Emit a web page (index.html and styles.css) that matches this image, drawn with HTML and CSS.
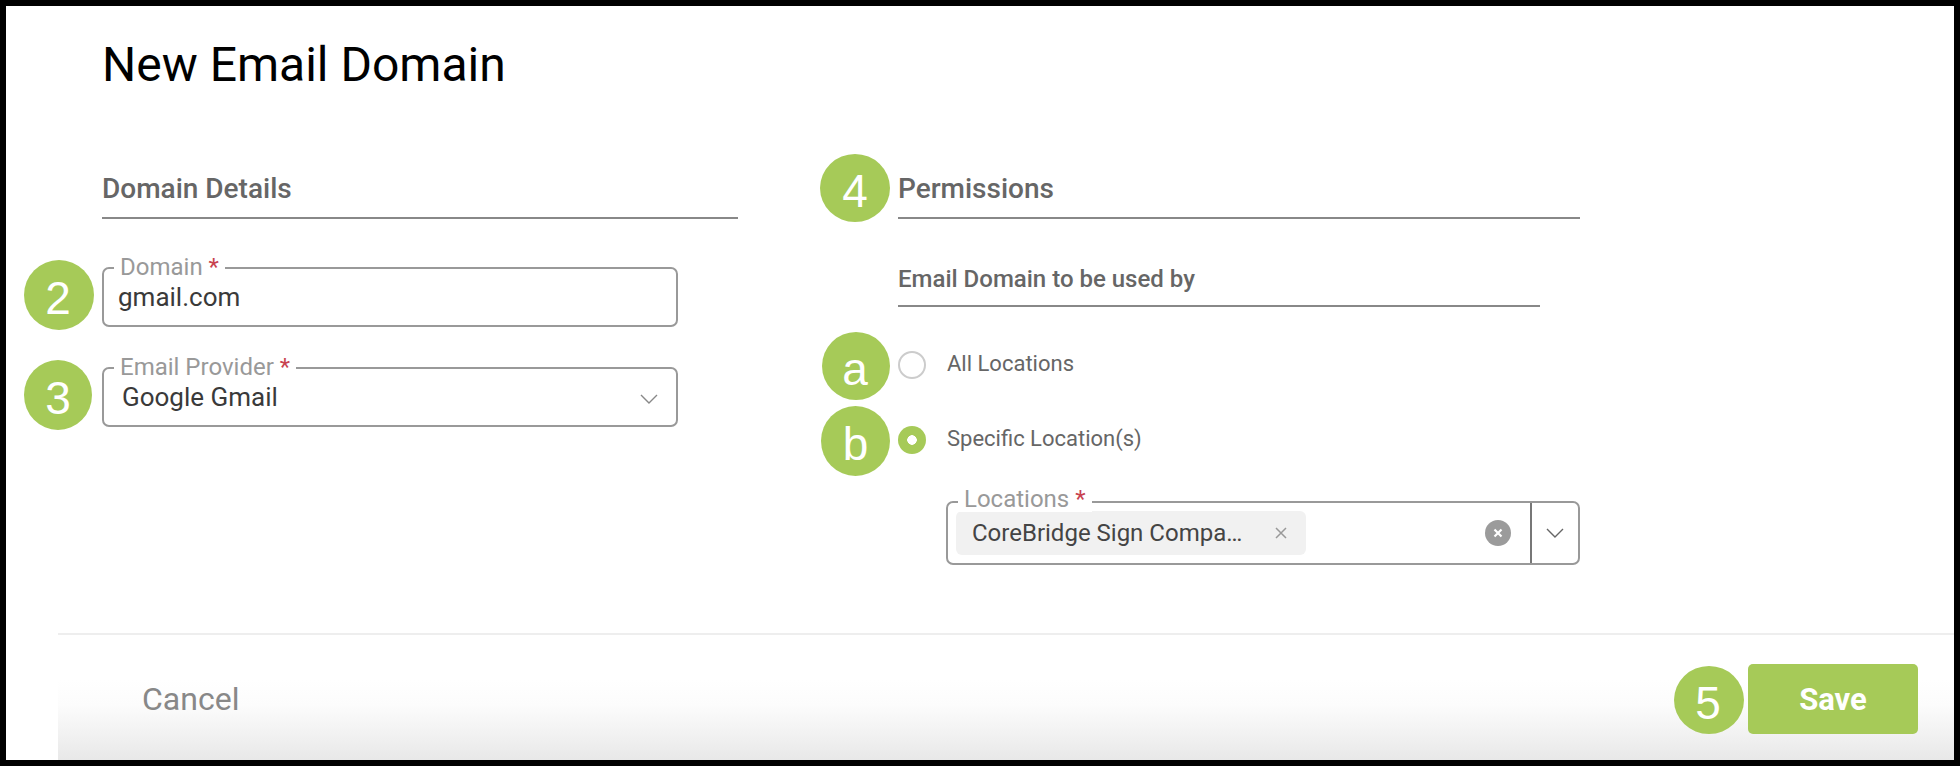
FILE: index.html
```html
<!DOCTYPE html>
<html lang="en">
<head>
<meta charset="utf-8">
<title>New Email Domain</title>
<link rel="stylesheet" href="styles.css">
</head>
<body>
<div class="frame">
  <main class="main">
    <h1 class="title">New Email Domain</h1>
    <div class="columns">
      <section class="col-left">
        <h2 class="section-title">Domain Details</h2>
        <div class="field field-domain">
          <span class="badge badge-left">2</span>
          <label class="float-label">Domain <span class="req">*</span></label>
          <span class="field-value value-domain">gmail.com</span>
        </div>
        <div class="field field-provider">
          <span class="badge badge-left badge-narrow">3</span>
          <label class="float-label">Email Provider <span class="req">*</span></label>
          <span class="field-value value-provider">Google Gmail</span>
          <svg class="chevron" viewBox="0 0 18 10" width="18" height="10"><path d="M1 1l8 8 8-8" fill="none" stroke="#888" stroke-width="1.4"/></svg>
        </div>
      </section>
      <section class="col-right">
        <h2 class="section-title">
          <span class="badge badge-four">4</span>
          Permissions
        </h2>
        <h3 class="sub-title">Email Domain to be used by</h3>
        <div class="radio-row row-all">
          <span class="badge badge-a">a</span>
          <span class="radio"></span>
          <span class="radio-label">All Locations</span>
        </div>
        <div class="radio-row row-specific">
          <span class="badge badge-b">b</span>
          <span class="radio radio-on"></span>
          <span class="radio-label">Specific Location(s)</span>
        </div>
        <div class="field field-locations">
          <label class="float-label label-locations">Locations <span class="req">*</span></label>
          <span class="chip">
            <span class="chip-text">CoreBridge Sign Compa…</span>
            <svg class="chip-x" viewBox="0 0 12 12" width="12" height="12"><path d="M1 1l10 10M11 1L1 11" fill="none" stroke="#999" stroke-width="1.5"/></svg>
          </span>
          <svg class="clear" viewBox="0 0 26 26" width="26" height="26"><circle cx="13" cy="13" r="13" fill="#9b9b9b"/><path d="M9.5 9.5l7 7M16.5 9.5l-7 7" fill="none" stroke="#fff" stroke-width="2.2"/></svg>
          <span class="select-toggle">
            <svg viewBox="0 0 18 10" width="18" height="10"><path d="M1 1l8 8 8-8" fill="none" stroke="#666" stroke-width="1.4"/></svg>
          </span>
        </div>
      </section>
    </div>
  </main>
  <footer class="footer">
    <span class="cancel">Cancel</span>
    <span class="save-wrap">
      <span class="badge badge-save">5</span>
      <button class="save" type="button">Save</button>
    </span>
  </footer>
</div>
</body>
</html>
```
FILE: styles.css
```css
* { box-sizing: border-box; }
html, body { margin: 0; height: 100%; }
body {
  background: #000;
  font-family: Roboto, "Liberation Sans", sans-serif;
  overflow: hidden;
}
.frame {
  margin: 6px 6px 0;
  height: 754px;
  background: #fff;
  display: flex;
  flex-direction: column;
}
.main { flex: 1; padding: 34px 0 0 96px; }
.title {
  margin: 0;
  font-size: 48px;
  line-height: 50px;
  font-weight: 400;
  color: #000;
}
.columns { display: flex; margin-top: 85px; }
.col-left { width: 636px; margin-right: 160px; }
.col-right { width: 682px; }
.section-title {
  position: relative;
  margin: 0;
  height: 44px;
  font-size: 28px;
  line-height: 28px;
  font-weight: 500;
  color: #666;
  border-bottom: 2px solid #888;
}
.sub-title {
  margin: 46px 0 0;
  width: 642px;
  height: 42px;
  font-size: 24px;
  line-height: 28px;
  font-weight: 500;
  color: #666;
  border-bottom: 2px solid #888;
}
.field {
  position: relative;
  border: 2px solid #999;
  border-radius: 7px;
  background: #fff;
  display: flex;
  align-items: center;
}
.field-domain, .field-provider { width: 576px; height: 60px; }
.field-domain { margin-top: 48px; padding-left: 14px; }
.field-provider { margin-top: 40px; padding-left: 18px; justify-content: space-between; padding-right: 18px; }
.field-locations {
  width: 634px;
  height: 64px;
  margin: 47px 0 0 48px;
  padding-left: 8px;
}
.float-label {
  position: absolute;
  left: 10px;
  top: -15px;
  padding: 0 6px;
  background: #fff;
  font-size: 24px;
  line-height: 26px;
  color: #999;
}
.label-locations { top: -17px; }
.req { color: #c8424f; }
.field-value { font-size: 26px; line-height: 30px; color: #3a3a3a; }
.chevron { margin-top: 4px; }
.chip {
  display: flex;
  align-items: center;
  justify-content: space-between;
  width: 350px;
  height: 44px;
  padding: 0 19px 0 16px;
  background: #f1f1f1;
  border-radius: 6px;
}
.chip-text { font-size: 24px; color: #444; white-space: nowrap; }
.clear { margin-left: auto; margin-right: 19px; }
.select-toggle {
  align-self: stretch;
  width: 48px;
  border-left: 2px solid #777;
  display: flex;
  align-items: center;
  justify-content: center;
}
.radio-row { position: relative; display: flex; align-items: center; }
.row-all { margin-top: 44px; height: 28px; }
.row-specific { margin-top: 47px; height: 28px; }
.radio {
  width: 28px;
  height: 28px;
  border: 2px solid #ccc;
  border-radius: 50%;
  background: #fff;
  margin-right: 22px;
  flex: none;
}
.radio-on {
  border: 0;
  background: radial-gradient(circle, #fff 0 4.5px, #a6ca58 5px);
}
.radio-label { font-size: 22px; color: #666; line-height: 24px; margin-left: -1px; margin-top: -2px; }
.badge {
  position: absolute;
  display: flex;
  align-items: center;
  justify-content: center;
  width: 70px;
  height: 70px;
  padding-top: 5px;
  border-radius: 50%;
  background: #a6ca58;
  color: #fff;
  font-family: "Liberation Sans", Arial, sans-serif;
  font-size: 46px;
  line-height: 1;
}
.badge-left { left: -80px; top: -9px; padding-right: 2px; }
.badge-narrow { width: 68px; padding-right: 0; }
.badge-four { left: -78px; top: -21px; height: 68px; }
.badge-a { left: -76px; top: -19px; width: 68px; height: 68px; padding-right: 2px; }
.badge-b { left: -77px; top: -20px; width: 69px; }
.footer {
  margin-left: 52px;
  height: 127px;
  flex: none;
  border-top: 2px solid #eee;
  background: linear-gradient(to bottom, #fff 0, #fff 45px, #fcfcfc 70px, #e8e8e8 125px);
  display: flex;
  align-items: flex-start;
  justify-content: space-between;
  padding: 29px 36px 0 84px;
}
.cancel { font-size: 32px; line-height: 70px; color: #888; }
.save-wrap { position: relative; display: block; }
.save {
  display: block;
  width: 170px;
  height: 70px;
  border: 0;
  border-radius: 5px;
  background: #a6ca58;
  color: #fff;
  font-family: Roboto, sans-serif;
  font-size: 31px;
  font-weight: 700;
}
.badge-save { left: -74px; top: 2px; width: 70px; height: 68px; padding-right: 2px; }
```
